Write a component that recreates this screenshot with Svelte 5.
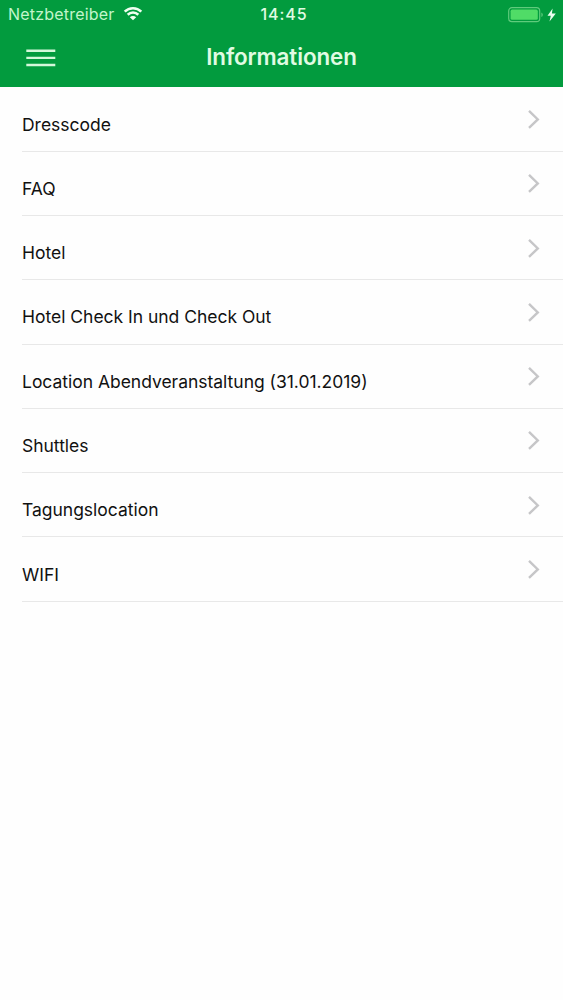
<script lang="ts">
	// Entries of the information list, in display order.
	const items: string[] = [
		'Dresscode',
		'FAQ',
		'Hotel',
		'Hotel Check In und Check Out',
		'Location Abendveranstaltung (31.01.2019)',
		'Shuttles',
		'Tagungslocation',
		'WIFI'
	];
</script>

<div class="screen">
	<header>
		<!-- Status bar: carrier, time, battery -->
		<div class="status-bar">
			<div class="carrier">
				<span>Netzbetreiber</span>
				<svg class="wifi" viewBox="0 0 20 15" width="20" height="15">
					<path d="M1.7 5.6a11.8 11.8 0 0 1 16.6 0" />
					<path d="M4.7 8.7a7.6 7.6 0 0 1 10.6 0" />
					<path class="dot" d="M6.8 11.2a4.6 4.6 0 0 1 6.4 0L10 14.3z" />
				</svg>
			</div>
			<span class="time">14:45</span>
			<div class="power">
				<svg viewBox="0 0 50 18" width="50" height="18">
					<rect class="battery" x="0.7" y="1.7" width="31" height="14" rx="3.2" />
					<rect class="charge" x="2.6" y="3.6" width="27.2" height="10.2" rx="1.6" />
					<path class="cap" d="M33.4 6.4c1.9.8 1.9 3.8 0 4.6z" />
					<path class="bolt" d="M44.6 2.4 39.5 9.8h3.3l-1.3 5.8 6.3-8h-3.9z" />
				</svg>
			</div>
		</div>

		<!-- Title bar -->
		<div class="title-bar">
			<button class="menu" aria-label="Menü">
				<svg viewBox="0 0 30 20" width="30" height="20">
					<path d="M0.3 2.8h29M0.3 9.9h29M0.3 17h29" />
				</svg>
			</button>
			<h1>Informationen</h1>
		</div>
	</header>

	<ul>
		{#each items as item}
			<li>
				<span class="label">{item}</span>
				<svg class="chevron" viewBox="0 0 14 20" width="14" height="20">
					<path d="M2 1.9 10.8 10.4 2 18.9" />
				</svg>
			</li>
		{/each}
	</ul>
</div>

<style>
	:global(body) {
		margin: 0;
		background: #fefefe;
	}
	.screen {
		min-height: 1000px;
		font-family: Inter, 'Liberation Sans', sans-serif;
		color: #111;
	}
	header {
		height: 87px;
		background: #029b3e;
		color: #e0fbe3;
	}
	.status-bar {
		display: grid;
		grid-template-columns: 1fr auto 1fr;
		align-items: center;
		height: 29px;
		padding: 0 5px 0 8px;
		font-size: 16px;
		line-height: 29px;
	}
	.carrier {
		display: flex;
		align-items: center;
		gap: 8px;
		letter-spacing: 0.2px;
		color: #c3f5cb;
	}
	.wifi {
		margin-top: -3px;
		fill: none;
		stroke: #f0fff0;
		stroke-width: 2.6;
	}
	.wifi .dot {
		fill: #f0fff0;
		stroke: none;
	}
	.time {
		padding-left: 2px;
		font-weight: 500;
		letter-spacing: 0.9px;
	}
	.power {
		display: flex;
		justify-content: flex-end;
	}
	.battery {
		fill: none;
		stroke: #5fcb7c;
		stroke-width: 1.2;
	}
	.charge {
		fill: #50dc67;
	}
	.cap {
		fill: #5fcb7c;
	}
	.bolt {
		fill: #ecfff0;
	}
	.title-bar {
		display: grid;
		grid-template-columns: 1fr auto 1fr;
		align-items: center;
		height: 58px;
	}
	.menu {
		display: flex;
		width: 30px;
		margin: 0 0 0 26px;
		padding: 0;
		border: 0;
		background: none;
	}
	.menu path {
		stroke: #d4f8da;
		stroke-width: 2.4;
	}
	h1 {
		margin: 0 0 2px;
		font-size: 22.4px;
		font-weight: 600;
		letter-spacing: -0.1px;
		line-height: 56px;
	}
	ul {
		margin: 0;
		padding: 0.4px 0 0 22px;
		list-style: none;
	}
	li {
		display: flex;
		justify-content: space-between;
		box-sizing: border-box;
		height: 64.3px;
		padding-right: 22px;
		border-bottom: 1px solid #e8e8e8;
	}
	.label {
		padding-top: 25.2px;
		font-size: 17.5px;
		letter-spacing: -0.02px;
		line-height: 24px;
		white-space: nowrap;
	}
	.chevron {
		margin-top: 21.6px;
		fill: none;
		stroke: #c6c6c8;
		stroke-width: 2.4;
	}
</style>
